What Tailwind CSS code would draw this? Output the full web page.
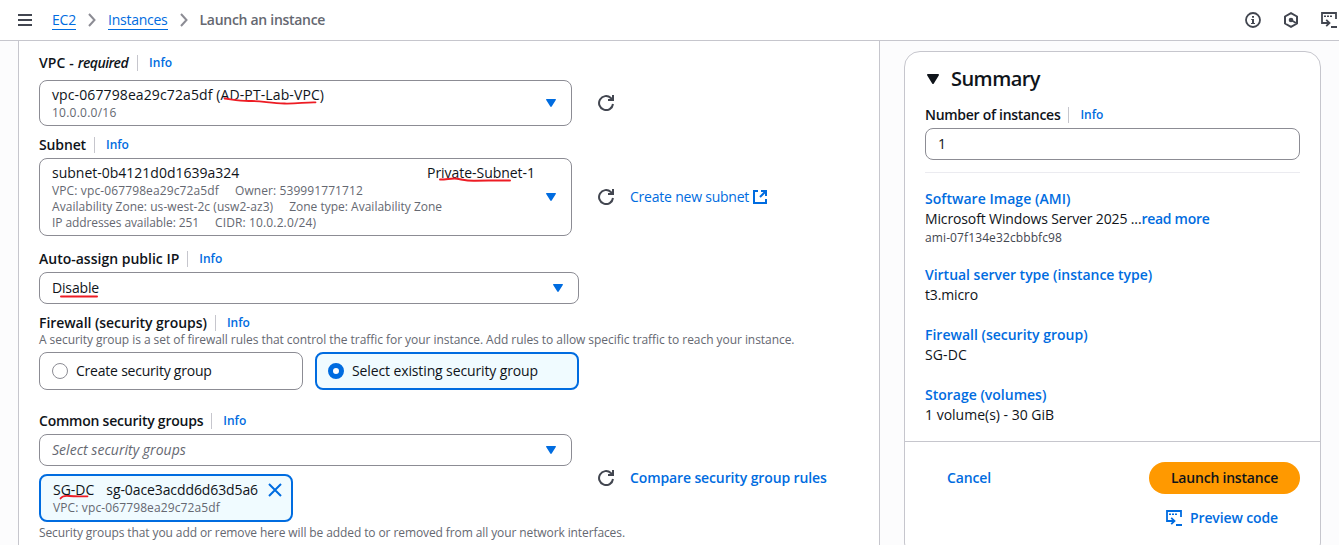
<!DOCTYPE html>
<html lang="en">
<head>
<meta charset="utf-8">
<title>Launch an instance</title>
<script src="https://cdn.jsdelivr.net/npm/@tailwindcss/browser@4"></script>
</head>
<body class="h-[545px] w-[1339px] overflow-hidden bg-[#fcfcfd] font-['Open_Sans','Noto_Sans',sans-serif] text-sm leading-5 text-[#0f141a] whitespace-nowrap">
<svg class="hidden">
  <symbol id="refresh" viewBox="0 0 16 16"><path d="M15 9a7 7 0 1 1-2.2-6.1L14.3 4.6" fill="none" stroke="currentColor" stroke-width="2"/><path d="M15 0v5h-5" fill="none" stroke="currentColor" stroke-width="2"/></symbol>
  <symbol id="caret" viewBox="0 0 10 8"><path d="M.7 0h8.6c.6 0 .9.7.5 1.1L5.7 7.5a.9.9 0 0 1-1.4 0L.2 1.1C-.2.7.1 0 .7 0z" fill="currentColor"/></symbol>
  <symbol id="shell" viewBox="0 0 16 16"><path d="M8 11H1V1h14v6M10 15h6" fill="none" stroke="currentColor" stroke-width="1.8"/><path d="M5.200 7.800 8.500 11l-3.300 3.200" fill="none" stroke="currentColor" stroke-width="1.800"/><path d="M3 3.500h2v1.500H3zM6 3.500h2v1.500H6zM9 3.500h2v1.500H9z" fill="currentColor"/></symbol>
</svg>

<header class="flex h-[41px] items-center border-b border-[#c6c6cd] bg-white pl-[18px]">
  <svg class="h-4 w-4 text-[#424650]" viewBox="0 0 16 16"><path d="M0 3h14M0 8h14M0 13h14" stroke="currentColor" stroke-width="2"/></svg>
  <nav class="ml-[18px] flex items-center">
    <a class="h-5 border-b border-[#006ce0] leading-5 tracking-[-0.2px] text-[#006ce0]">EC2</a>
    <svg class="ml-[11px] h-3.5 w-2.5" viewBox="0 0 10 14"><path d="M2 1l5.500 6L2 13" fill="none" stroke="#8c8c94" stroke-width="2"/></svg>
    <a class="ml-[11px] h-5 border-b border-[#006ce0] leading-5 tracking-[-0.25px] text-[#006ce0]">Instances</a>
    <svg class="ml-[11px] h-3.5 w-2.5" viewBox="0 0 10 14"><path d="M2 1l5.500 6L2 13" fill="none" stroke="#8c8c94" stroke-width="2"/></svg>
    <span class="ml-[11px] font-semibold tracking-[-0.29px] text-[#656871]">Launch an instance</span>
  </nav>
  <div class="ml-auto flex items-center text-[#424650]">
    <svg class="h-4 w-4" viewBox="0 0 16 16"><circle cx="8" cy="8" r="7" fill="none" stroke="currentColor" stroke-width="1.800"/><path d="M7 4h2v1.800H7zM6.200 7H9v4h1v1H6v-1h1V8h-.8z" fill="currentColor"/></svg>
    <svg class="ml-[22px] h-4 w-4" viewBox="0 0 16 16"><path d="M8 1.100 14 4.500v7L8 14.900 2 11.500v-7z" fill="none" stroke="currentColor" stroke-width="2" stroke-linejoin="round"/><circle cx="8" cy="8" r="2.300" fill="currentColor"/><path d="M8 8l5 3" stroke="currentColor" stroke-width="1.800"/></svg>
    <svg class="mr-0.5 ml-[22px] h-4 w-4"><use href="#shell"/></svg>
  </div>
</header>

<main class="flex h-[504px] pl-[18px]">
  <section class="w-[862px] border-x border-[#c6c6cd] bg-white pt-3 pl-5">
    <div class="flex items-center">
      <span class="font-semibold tracking-[0.1px]">VPC -</span><span class="ml-1 font-semibold tracking-[-0.56px] italic">required</span>
      <i class="ml-[9px] h-4 w-px bg-[#c6c6cd]"></i><a class="ml-[11px] text-xs font-semibold text-[#006ce0]">Info</a>
    </div>
    <div class="mt-[7px] flex items-center">
      <div class="flex h-[46px] w-[533px] items-center rounded-lg border border-[#8c8c94] pr-[15px] pl-3">
        <div>
          <div class="relative w-fit leading-5 tracking-[0.11px]">vpc-067798ea29c72a5df (AD-PT-Lab-VPC)
            <svg class="absolute top-3 left-[170px] h-3 w-[98px]" viewBox="0 0 98 12"><path d="M2.500 1.500c8 1 16 2.800 26 2.500s20 2.200 34 2.500 20-1.500 31-1.200" fill="none" stroke="#ed1c24" stroke-width="1.800" stroke-linecap="round"/></svg>
          </div>
          <div class="text-xs leading-4 tracking-[0.24px] text-[#656871]">10.0.0.0/16</div>
        </div>
        <svg class="ml-auto h-2 w-2.5 text-[#006ce0]"><use href="#caret"/></svg>
      </div>
      <svg class="ml-[26px] h-4 w-4 text-[#424650]"><use href="#refresh"/></svg>
    </div>

    <div class="mt-[9px] flex items-center">
      <span class="font-semibold tracking-[-0.14px]">Subnet</span>
      <i class="ml-2 h-4 w-px bg-[#c6c6cd]"></i><a class="ml-[11px] text-xs font-semibold text-[#006ce0]">Info</a>
    </div>
    <div class="mt-[3px] flex items-center">
      <div class="flex h-[78px] w-[533px] items-center rounded-lg border border-[#8c8c94] pr-[15px] pl-3">
        <div class="w-[483px]">
          <div class="flex justify-between leading-5">
            <span>subnet-0b4121d0d1639a324</span>
            <span class="relative tracking-[-0.04px]">Private-Subnet-1
              <svg class="absolute top-3 left-[11px] h-3 w-[78px]" viewBox="0 0 78 12"><path d="M2 4.500c6 .2 12-1.500 17-.8s10 2.300 18 2 22 0 35-.2" fill="none" stroke="#ed1c24" stroke-width="2" stroke-linecap="round"/></svg>
            </span>
          </div>
          <div class="flex gap-4 text-xs leading-4 text-[#656871]"><span class="tracking-[0.12px]">VPC: vpc-067798ea29c72a5df</span><span class="tracking-[0.09px]">Owner: 539991771712</span></div>
          <div class="flex gap-4 text-xs leading-4 text-[#656871]"><span class="tracking-[0.05px]">Availability Zone: us-west-2c (usw2-az3)</span><span>Zone type: Availability Zone</span></div>
          <div class="flex gap-4 text-xs leading-4 text-[#656871]"><span class="tracking-[-0.1px]">IP addresses available: 251</span><span class="tracking-[0.13px]">CIDR: 10.0.2.0/24)</span></div>
        </div>
        <svg class="ml-auto h-2 w-2.5 text-[#006ce0]"><use href="#caret"/></svg>
      </div>
      <svg class="ml-[26px] h-4 w-4 text-[#424650]"><use href="#refresh"/></svg>
      <a class="ml-4 tracking-[-0.22px] text-[#006ce0]">Create new subnet</a>
      <svg class="ml-[3px] h-4 w-4 text-[#006ce0]" viewBox="0 0 16 16"><path d="M6 2H2v12h12v-4M9 2h5v5M14 2 8 8" fill="none" stroke="currentColor" stroke-width="2"/></svg>
    </div>

    <div class="mt-[13px] flex items-center">
      <span class="font-semibold">Auto-assign public IP</span>
      <i class="ml-2 h-4 w-px bg-[#c6c6cd]"></i><a class="ml-[11px] text-xs font-semibold text-[#006ce0]">Info</a>
    </div>
    <div class="mt-[3px] flex h-8 w-[540px] items-center rounded-lg border border-[#8c8c94] pr-[15px] pl-3">
      <span class="relative tracking-[-0.16px]">Disable
        <svg class="absolute top-4 left-[7px] h-2 w-10" viewBox="0 0 40 8"><path d="M2 2.500h36" stroke="#ed1c24" stroke-width="2" stroke-linecap="round"/></svg>
      </span>
      <svg class="ml-auto h-2 w-2.5 text-[#006ce0]"><use href="#caret"/></svg>
    </div>

    <div class="mt-[9px] flex items-center">
      <span class="font-semibold tracking-[-0.06px]">Firewall (security groups)</span>
      <i class="ml-2 h-4 w-px bg-[#c6c6cd]"></i><a class="ml-[11px] text-xs font-semibold text-[#006ce0]">Info</a>
    </div>
    <p class="-mt-px text-xs leading-4 tracking-[-0.051px] text-[#656871]">A security group is a set of firewall rules that control the traffic for your instance. Add rules to allow specific traffic to reach your instance.</p>
    <div class="mt-1 flex gap-3">
      <div class="flex h-[38px] w-[264px] items-center gap-2 rounded-lg border border-[#8c8c94] pl-3">
        <span class="h-4 w-4 rounded-full border border-[#8c8c94]"></span><span class="tracking-[-0.22px]">Create security group</span>
      </div>
      <div class="flex h-[38px] w-[264px] items-center gap-2 rounded-lg border-2 border-[#006ce0] bg-[#f0fbff] pl-[11px]">
        <span class="h-4 w-4 rounded-full border-[5px] border-[#006ce0] bg-white"></span><span class="tracking-[-0.12px]">Select existing security group</span>
      </div>
    </div>

    <div class="mt-[21px] flex items-center">
      <span class="font-semibold tracking-[-0.23px]">Common security groups</span>
      <i class="ml-2 h-4 w-px bg-[#c6c6cd]"></i><a class="ml-[11px] text-xs font-semibold text-[#006ce0]">Info</a>
    </div>
    <div class="mt-[3px] flex items-center">
      <div class="w-[533px]">
        <div class="flex h-8 items-center rounded-lg border border-[#8c8c94] pr-[15px] pl-3">
          <span class="tracking-[0.03px] text-[#656871] italic">Select security groups</span>
          <svg class="ml-auto h-2 w-2.5 text-[#006ce0]"><use href="#caret"/></svg>
        </div>
        <div class="mt-2 flex h-12 w-[254px] rounded-lg border-2 border-[#006ce0] bg-[#f0fbff] pt-1 pl-3">
          <div>
            <div class="flex gap-3 leading-5">
              <span class="relative">SG-DC
                <svg class="absolute top-3 left-1.5 h-2.5 w-8" viewBox="0 0 32 10"><path d="M1.500 6.500c2-3 5-3 9-2.500s12 .5 18 .3" fill="none" stroke="#ed1c24" stroke-width="1.800" stroke-linecap="round"/></svg>
              </span>
              <span class="tracking-[-0.1px]">sg-0ace3acdd6d63d5a6</span>
            </div>
            <div class="text-xs leading-4 tracking-[0.12px] text-[#656871]">VPC: vpc-067798ea29c72a5df</div>
          </div>
          <svg class="mt-[3px] ml-2.5 h-3.5 w-3.5" viewBox="0 0 14 14"><path d="M1 1l12 12M13 1 1 13" stroke="#006ce0" stroke-width="2"/></svg>
        </div>
      </div>
      <svg class="ml-[26px] h-4 w-4 text-[#424650]"><use href="#refresh"/></svg>
      <a class="ml-4 font-semibold tracking-[-0.12px] text-[#006ce0]">Compare security group rules</a>
    </div>
    <p class="mt-[3px] text-xs leading-4 tracking-[-0.1px] text-[#656871]">Security groups that you add or remove here will be added to or removed from all your network interfaces.</p>
  </section>

  <aside class="mt-2.5 ml-6 h-[508px] w-[417px] shrink-0 rounded-2xl border border-[#c6c6cd] bg-white">
    <div class="h-[390px] border-b border-[#c6c6cd] px-5 pt-[15px]">
      <div class="flex h-6 items-center">
        <svg class="ml-0.5 h-2.5 w-3" viewBox="0 0 10 8" preserveAspectRatio="none"><use href="#caret"/></svg>
        <h2 class="ml-3 text-xl leading-6 font-semibold tracking-[-0.54px]">Summary</h2>
      </div>
      <div class="mt-3.5 flex items-center">
        <span class="font-semibold tracking-[-0.29px]">Number of instances</span>
        <i class="ml-2 h-4 w-px bg-[#c6c6cd]"></i><a class="ml-[11px] text-xs font-semibold text-[#006ce0]">Info</a>
      </div>
      <div class="mt-[3px] flex h-8 items-center rounded-lg border border-[#8c8c94] pl-3">1</div>
      <hr class="mt-3 border-[#ebebf0]">
      <div class="mt-4 font-semibold tracking-[0.04px] text-[#006ce0]">Software Image (AMI)</div>
      <div class="flex"><span class="tracking-[-0.13px]">Microsoft Windows Server 2025 ...</span><a class="font-semibold tracking-[-0.29px] text-[#006ce0]">read more</a></div>
      <div class="text-xs leading-[18px] tracking-[0.11px] text-[#424650]">ami-07f134e32cbbbfc98</div>
      <div class="mt-[18px] font-semibold tracking-[-0.02px] text-[#006ce0]">Virtual server type (instance type)</div>
      <div class="tracking-[-0.13px]">t3.micro</div>
      <div class="mt-5 font-semibold text-[#006ce0]">Firewall (security group)</div>
      <div class="tracking-[0.13px]">SG-DC</div>
      <div class="mt-5 font-semibold text-[#006ce0]">Storage (volumes)</div>
      <div>1 volume(s) - 30 GiB</div>
    </div>
    <div class="flex justify-between pt-5 pr-5 pl-[42px] font-semibold">
      <a class="h-8 leading-8 tracking-[-0.14px] text-[#006ce0]">Cancel</a>
      <div class="flex w-[151px] flex-col gap-2">
        <button class="h-8 rounded-full bg-[#ff9900] tracking-[-0.21px]">Launch instance</button>
        <a class="flex h-8 items-center pl-[17px] text-[#006ce0]"><svg class="h-4 w-4"><use href="#shell"/></svg><span class="ml-2 tracking-[-0.13px]">Preview code</span></a>
      </div>
    </div>
  </aside>
</main>
</body>
</html>
